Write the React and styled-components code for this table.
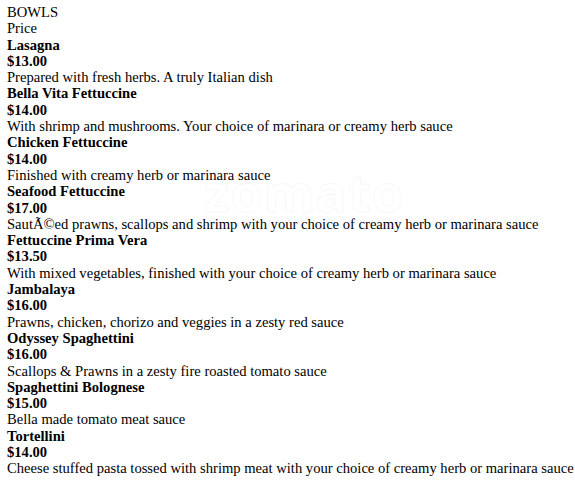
import React from 'react';
import styled, { createGlobalStyle } from 'styled-components';

const GlobalStyle = createGlobalStyle`
    body {
        margin: 0;
        background: #FFF;
    }
`;

const Page = styled.div`
    position: relative;
    padding: 4px 2px 0 7px;
    font-family: "Liberation Serif", "Times New Roman", serif;
    font-size: 14.6px;
    line-height: 16.3px;
    color: #000;
`;

const Line = styled.div`
    font-weight: ${props => props.bold ? 'bold' : 'normal'};
    white-space: nowrap;
`;

const Watermark = styled.div`
    position: absolute;
    top: 184px;
    left: 204px;
    font-family: "Open Sans", "DejaVu Sans", sans-serif;
    font-size: 52px;
    font-weight: bold;
    letter-spacing: 1px;
    color: transparent;
    -webkit-text-stroke: 1px rgba(0, 0, 0, .035);
    pointer-events: none;
`;

const items = [
    { name: 'Lasagna', price: '$13.00', desc: 'Prepared with fresh herbs. A truly Italian dish' },
    { name: 'Bella Vita Fettuccine', price: '$14.00', desc: 'With shrimp and mushrooms. Your choice of marinara or creamy herb sauce' },
    { name: 'Chicken Fettuccine', price: '$14.00', desc: 'Finished with creamy herb or marinara sauce' },
    { name: 'Seafood Fettuccine', price: '$17.00', desc: 'SautÃ©ed prawns, scallops and shrimp with your choice of creamy herb or marinara sauce' },
    { name: 'Fettuccine Prima Vera', price: '$13.50', desc: 'With mixed vegetables, finished with your choice of creamy herb or marinara sauce' },
    { name: 'Jambalaya', price: '$16.00', desc: 'Prawns, chicken, chorizo and veggies in a zesty red sauce' },
    { name: 'Odyssey Spaghettini', price: '$16.00', desc: 'Scallops & Prawns in a zesty fire roasted tomato sauce' },
    { name: 'Spaghettini Bolognese', price: '$15.00', desc: 'Bella made tomato meat sauce' },
    { name: 'Tortellini', price: '$14.00', desc: 'Cheese stuffed pasta tossed with shrimp meat with your choice of creamy herb or marinara sauce' },
];

const App = () => {
    return (
        <Page>
            <GlobalStyle />
            <Line>BOWLS</Line>
            <Line>Price</Line>
            {items.map(item => (
                <React.Fragment key={item.name}>
                    <Line bold>{item.name}</Line>
                    <Line bold>{item.price}</Line>
                    <Line>{item.desc}</Line>
                </React.Fragment>
            ))}
            <Watermark>zomato</Watermark>
        </Page>
    );
}

export default App;
